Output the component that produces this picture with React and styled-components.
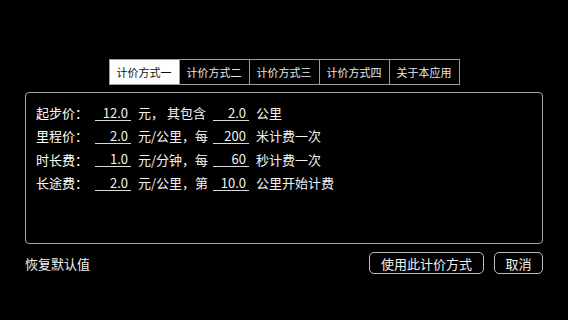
import React, { useState } from 'react';
import styled, { createGlobalStyle } from 'styled-components';

const GlobalStyle = createGlobalStyle`
    html, body {
        margin:0;
        padding:0;
        background:#000;
    }
    body {
        font-family:"Noto Sans CJK SC", "Liberation Sans", sans-serif;
        color:#f2f2f2;
    }
`;

const tabs = ['计价方式一', '计价方式二', '计价方式三', '计价方式四', '关于本应用'];

const rows = [
    { label: '起步价：', a: '12.0', mid: '元， 其包含', b: '2.0', tail: '公里' },
    { label: '里程价：', a: '2.0', mid: '元/公里，每', b: '200', tail: '米计费一次' },
    { label: '时长费：', a: '1.0', mid: '元/分钟，每', b: '60', tail: '秒计费一次' },
    { label: '长途费：', a: '2.0', mid: '元/公里，第', b: '10.0', tail: '公里开始计费' },
];

const App = () => {
    const [active, setActive] = useState(0);
    return (
        <>
            <GlobalStyle />
            <Page>
                <TabBar>
                    {tabs.map((t, i) => (
                        <Tab key={t} active={i === active} onClick={() => setActive(i)}>{t}</Tab>
                    ))}
                </TabBar>
                <Panel>
                    {rows.map((r) => (
                        <Row key={r.label}>
                            <Label>{r.label}</Label>
                            <Field>{r.a}</Field>
                            <Mid>{r.mid}</Mid>
                            <Field>{r.b}</Field>
                            <Tail>{r.tail}</Tail>
                        </Row>
                    ))}
                </Panel>
                <Footer>
                    <Reset>恢复默认值</Reset>
                    <Buttons>
                        <Btn width={115}>使用此计价方式</Btn>
                        <Btn width={49}>取消</Btn>
                    </Buttons>
                </Footer>
            </Page>
        </>
    );
};

export default App;

const Page = styled.div`
    width:568px;
    height:320px;
    box-sizing:border-box;
    padding-top:59px;
    display:flex;
    flex-direction:column;
    align-items:center;
`;

const TabBar = styled.div`
    display:flex;
    height:26px;
`;

const Tab = styled.div`
    width:71px;
    height:26px;
    box-sizing:border-box;
    border:1px solid #9a9a9a;
    margin-left:-1px;
    &:first-child { margin-left:0; }
    display:flex;
    align-items:center;
    justify-content:center;
    font-size:11px;
    background:${(p) => (p.active ? '#fff' : '#000')};
    color:${(p) => (p.active ? '#111' : '#e6e6e6')};
    cursor:pointer;
`;

const Panel = styled.div`
    margin-top:7px;
    width:518px;
    height:152px;
    box-sizing:border-box;
    border:1px solid #a8a8a8;
    border-radius:4px;
    padding:8px 0 0 10px;
    display:flex;
    flex-direction:column;
`;

const Row = styled.div`
    display:flex;
    align-items:center;
    height:23.3px;
    font-size:13px;
    white-space:pre;
`;

const Label = styled.span`
    width:59px;
    color:#fff;
`;

const Field = styled.span`
    width:33px;
    height:15px;
    line-height:15px;
    border-bottom:1px solid #d8d8d8;
    text-align:right;
    padding-right:3px;
`;

const Mid = styled.span`
    margin-left:7px;
    width:75px;
`;

const Tail = styled.span`
    margin-left:7px;
`;

const Footer = styled.div`
    margin-top:8px;
    width:518px;
    display:flex;
    justify-content:space-between;
    align-items:center;
`;

const Reset = styled.span`
    font-size:13px;
    cursor:pointer;
`;

const Buttons = styled.div`
    display:flex;
    gap:10px;
`;

const Btn = styled.button`
    width:${(p) => p.width}px;
    height:22px;
    box-sizing:border-box;
    border:1px solid #bdbdbd;
    border-radius:5px;
    background:#000;
    color:#f2f2f2;
    font-family:inherit;
    font-size:13px;
    padding:0;
    cursor:pointer;
`;
